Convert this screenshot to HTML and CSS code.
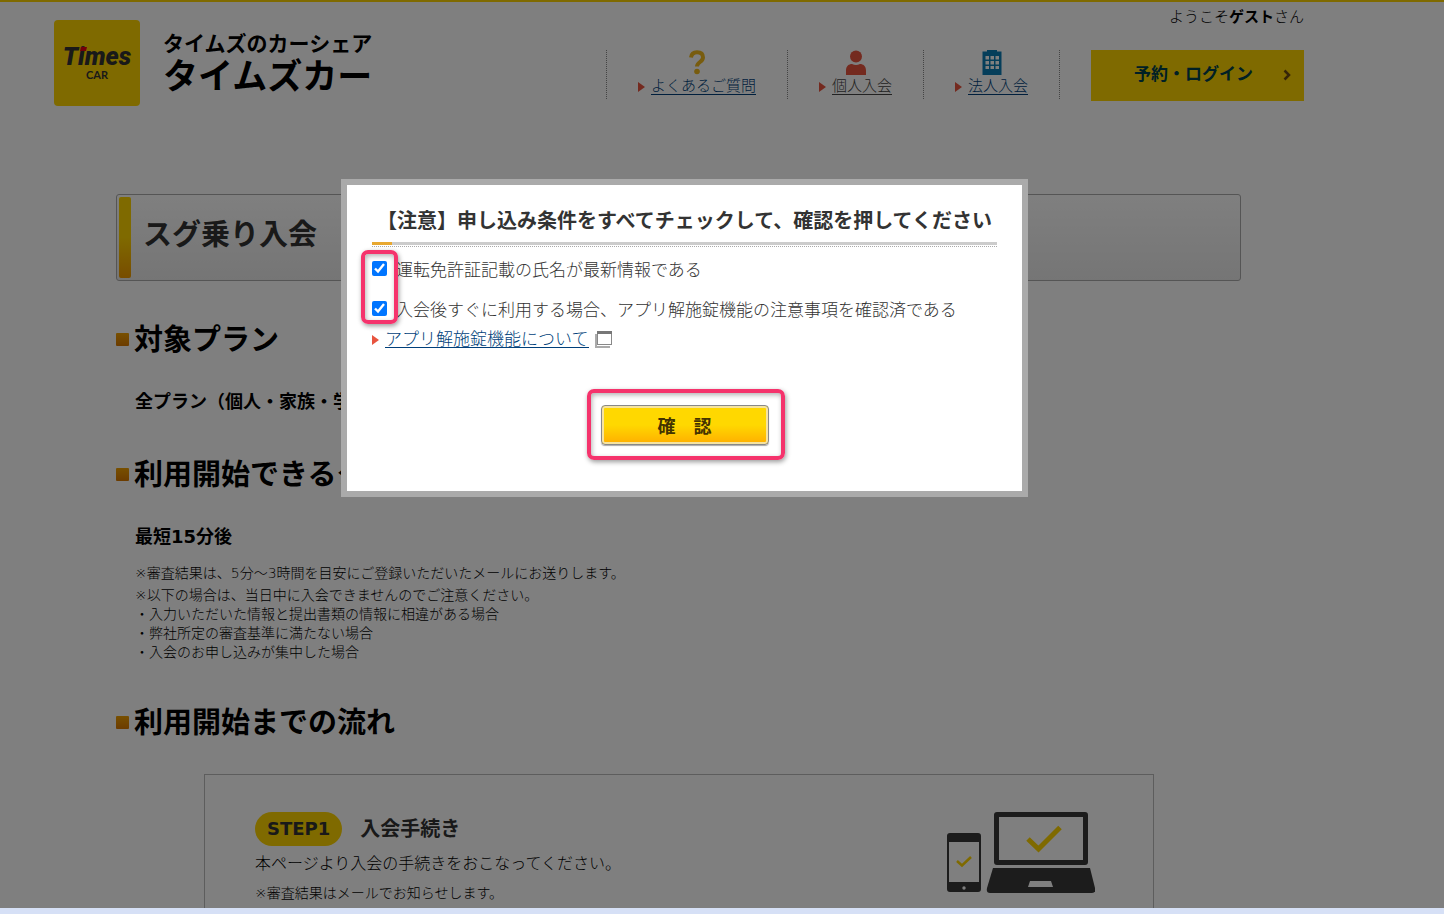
FILE: index.html
```html
<!DOCTYPE html>
<html lang="ja">
<head>
<meta charset="utf-8">
<meta name="viewport" content="width=device-width, initial-scale=1">
<title>スグ乗り入会 | タイムズカー</title>
<link rel="stylesheet" href="styles.css">
</head>
<body>
<div class="page">
  <header class="header">
    <a class="brand" href="#">
      <svg class="brand-mark" viewBox="0 0 86 86" role="img" aria-label="Times CAR">
        <rect width="86" height="86" rx="4" fill="#ffd400"/>
        <text class="mark-times" x="43" y="45" text-anchor="middle">Times</text>
        <path d="M27 27h6l-1 4h-6z" fill="#e60012"/>
        <text class="mark-car" x="43" y="59" text-anchor="middle">CAR</text>
      </svg>
      <span class="brand-text">
        <span class="brand-sub">タイムズのカーシェア</span>
        <span class="brand-name">タイムズカー</span>
      </span>
    </a>
    <div class="header-side">
      <p class="greeting">ようこそ<b>ゲスト</b>さん</p>
      <div class="header-row">
        <nav class="nav">
          <div class="nav-item nav-wide">
            <svg class="nav-icon" viewBox="0 0 28 25"><path d="M8 7.500C8.500 3.500 10.500 2.200 14 2.200c4 0 6 2.200 6 5.300 0 4.500-6 4.500-6 9" fill="none" stroke="#f0b81c" stroke-width="4"/><circle cx="14" cy="21.500" r="2.800" fill="#f0b81c"/></svg>
            <a class="arrow-link" href="#">よくあるご質問</a>
          </div>
          <div class="nav-item">
            <svg class="nav-icon" viewBox="0 0 28 25"><circle cx="14" cy="6.500" r="6" fill="#e8543f"/><path d="M4 25v-4.500C4 16 7 14 10 14q4 2 8 0c3 0 6 2 6 6.500V25z" fill="#e8543f"/></svg>
            <a class="arrow-link muted" href="#">個人入会</a>
          </div>
          <div class="nav-item">
            <svg class="nav-icon" viewBox="0 0 28 25"><path d="M4.500 1.500H9V0h10v1.500h4.500V25h-19z" fill="#0a7db5"/><g fill="#fff"><path d="M7.500 6H11v3.500H7.500zM12.500 6H16v3.500h-3.500zM17.500 6H21v3.500h-3.500zM7.500 11H11v3.500H7.500zM12.500 11H16v3.500h-3.500zM17.500 11H21v3.500h-3.500zM7.500 16H11v3H7.500zM12.500 16H16v3h-3.500zM17.500 16H21v3h-3.500z"/></g></svg>
            <a class="arrow-link" href="#">法人入会</a>
          </div>
        </nav>
        <button class="login" type="button">予約・ログイン
          <svg class="login-arrow" viewBox="0 0 8 12"><path d="M1.500 1.500L6 6l-4.500 4.500" fill="none" stroke="#6b4a10" stroke-width="2.500"/></svg>
        </button>
      </div>
    </div>
  </header>

  <main class="main">
    <h1 class="title"><span class="title-bar"></span><span class="title-text">スグ乗り入会</span></h1>

    <h2 class="section">対象プラン</h2>
    <p class="lead">全プラン（個人・家族・学生・法人）</p>

    <h2 class="section">利用開始できるタイミング</h2>
    <p class="lead">最短15分後</p>
    <div class="notes">
      <p>※審査結果は、5分～3時間を目安にご登録いただいたメールにお送りします。</p>
      <p>※以下の場合は、当日中に入会できませんのでご注意ください。</p>
      <ul>
        <li>・入力いただいた情報と提出書類の情報に相違がある場合</li>
        <li>・弊社所定の審査基準に満たない場合</li>
        <li>・入会のお申し込みが集中した場合</li>
      </ul>
    </div>

    <h2 class="section">利用開始までの流れ</h2>
    <section class="step">
      <div class="step-body">
        <h3 class="step-head"><span class="pill">STEP1</span>入会手続き</h3>
        <p class="step-text">本ページより入会の手続きをおこなってください。</p>
        <p class="step-note">※審査結果はメールでお知らせします。</p>
      </div>
      <svg class="devices" viewBox="0 0 149 81">
        <g fill="#383838">
          <path fill-rule="evenodd" d="M51 0h88a3 3 0 0 1 3 3v47a3 3 0 0 1-3 3H51a3 3 0 0 1-3-3V3a3 3 0 0 1 3-3zM53 5v43h84V5z"/>
          <path d="M47 56h97l5 20q1 5-3 5H44q-4 0-3-5z"/>
          <path fill-rule="evenodd" d="M4 21h28a3 3 0 0 1 3 3v53a3 3 0 0 1-3 3H4a3 3 0 0 1-3-3V24a3 3 0 0 1 3-3zM3 30v40h30V30z"/>
        </g>
        <path d="M84 69h21l2 6H82z" fill="#fff"/>
        <circle cx="18" cy="76" r="1.700" fill="#fff"/>
        <path d="M82 27l10.500 10L114 15.500" fill="none" stroke="#ffd400" stroke-width="5"/>
        <path d="M11 49l5 4.500 9-8.500" fill="none" stroke="#ffd400" stroke-width="2.500"/>
      </svg>
    </section>
  </main>
</div>

<div class="overlay">
  <div class="modal" role="dialog" aria-modal="true" aria-labelledby="modal-title">
    <h2 class="modal-title" id="modal-title">【注意】申し込み条件をすべてチェックして、確認を押してください</h2>
    <div class="checks">
      <div class="check"><input type="checkbox" id="c1" checked><label for="c1">運転免許証記載の氏名が最新情報である</label></div>
      <div class="check"><input type="checkbox" id="c2" checked><label for="c2">入会後すぐに利用する場合、アプリ解施錠機能の注意事項を確認済である</label></div>
      <span class="mark mark-checks"></span>
    </div>
    <p class="modal-link">
      <a class="arrow-link" href="#">アプリ解施錠機能について</a>
      <svg class="window-icon" viewBox="0 0 18 18"><path d="M1 4v13h14" fill="none" stroke="#aaa" stroke-width="2"/><rect x="2.500" y="1.500" width="14" height="13" fill="#fff" stroke="#888"/><path d="M2 1h15v3H2z" fill="#777"/></svg>
    </p>
    <div class="confirm-row">
      <div class="confirm-wrap">
        <button class="confirm" type="button">確　認</button>
        <span class="mark mark-confirm"></span>
      </div>
    </div>
  </div>
</div>
<div class="taskbar"></div>
</body>
</html>
```

FILE: styles.css
```css
* { box-sizing: border-box; }

body {
  margin: 0;
  height: 100vh;
  overflow: hidden;
  background: #fff;
  color: #000;
  font-family: "DejaVu Sans", "Noto Sans CJK JP", sans-serif;
  font-size: 15px;
  font-weight: 300;
  text-spacing-trim: space-all;
}

h1, h2, h3, p, ul { margin: 0; padding: 0; }
ul { list-style: none; }
b { font-weight: 700; }
button { font-family: inherit; border: 0; cursor: pointer; }

.page {
  border-top: 2px solid #ffd400;
  padding: 0 140px 0 54px;
}

/* Header */
.header {
  display: flex;
  justify-content: space-between;
  align-items: flex-start;
  height: 192px;
  padding-top: 5px;
}
.brand {
  display: flex;
  gap: 23px;
  margin-top: 13px;
  color: #000;
  text-decoration: none;
  font-family: "Noto Sans CJK JP", sans-serif;
  font-weight: 700;
}
.brand-mark { width: 86px; height: 86px; }
.mark-times {
  font: italic 900 25px Roboto, sans-serif;
  fill: #333;
}
.mark-car {
  font: 700 11px Lato, sans-serif;
  fill: #333;
}
.brand-text {
  display: flex;
  flex-direction: column;
  padding-top: 10px;
}
.brand-sub { font-size: 21px; line-height: 24px; }
.brand-name { font-size: 35px; line-height: 40px; }

.header-side {
  display: flex;
  flex-direction: column;
  align-items: flex-end;
}
.greeting { line-height: 20px; }
.header-row {
  display: flex;
  align-items: flex-start;
  gap: 31px;
  margin-top: 23px;
}
.nav { display: flex; border-right: 1px dotted #888; }
.nav-item {
  display: flex;
  flex-direction: column;
  align-items: center;
  width: 136px;
  height: 49px;
  border-left: 1px dotted #888;
}
.nav-wide { width: 181px; }
.nav-icon { width: 28px; height: 25px; }
.arrow-link {
  position: relative;
  padding-left: 13px;
  color: #003f7a;
  line-height: 22px;
  text-decoration: none;
  background: linear-gradient(currentColor, currentColor) 13px 19px / 100% 1px no-repeat;
}
.arrow-link::before {
  content: "";
  position: absolute;
  left: 0;
  top: 7px;
  border: solid transparent;
  border-width: 5px 0 5px 7px;
  border-left-color: #e8543f;
}
.muted { color: #444; }

.login {
  display: flex;
  align-items: center;
  justify-content: flex-end;
  gap: 30px;
  width: 213px;
  height: 51px;
  padding: 0 13px 6px 0;
  background: #ffd400;
  color: #00404a;
  font-size: 17px;
  font-weight: 700;
}
.login-arrow { width: 8px; height: 12px; margin-top: 4px; }

/* Content */
.main { padding: 0 63px 40px 62px; }
.title {
  display: flex;
  align-items: center;
  gap: 12px;
  height: 87px;
  padding: 2px;
  border: 1px solid #aaa;
  border-radius: 3px;
  background: linear-gradient(#fff, #ebebeb);
  color: #333;
  font-size: 29px;
  line-height: 40px;
  white-space: nowrap;
}
.title-text { padding-bottom: 6px; }
.title-bar {
  align-self: stretch;
  width: 12px;
  border-radius: 2px;
  background: linear-gradient(#ffd400 50%, #f09a00);
}
.section {
  display: flex;
  align-items: center;
  gap: 5px;
  margin-top: 38px;
  font-size: 29px;
  line-height: 42px;
  white-space: nowrap;
}
.section::before {
  content: "";
  width: 13px;
  height: 13px;
  margin-bottom: 2px;
  border-radius: 1px;
  background: linear-gradient(#f0a000, #d87800);
}
.lead {
  margin: 27px 0 0 19px;
  font-size: 18px;
  line-height: 28px;
  font-weight: 700;
}
.notes {
  margin: 13px 0 40px 19px;
  font-size: 14px;
  line-height: 19px;
}
.notes p { margin-bottom: 3px; }
.notes p + p { margin-bottom: 0; }

.step {
  display: flex;
  justify-content: space-between;
  align-items: flex-start;
  margin: 30px 87px 0 88px;
  padding: 37px 58px 60px 50px;
  border: 1px solid #bbb;
}
.step-head {
  display: flex;
  align-items: center;
  gap: 18px;
  color: #333;
  font-size: 20px;
  line-height: 34px;
}
.pill {
  padding: 0 12px;
  border-radius: 17px;
  background: #ffd400;
  font-size: 18px;
}
.step-text { margin-top: 4px; font-size: 16px; line-height: 28px; }
.step-note { margin-top: 5px; font-size: 14px; line-height: 20px; }
.devices { width: 149px; height: 81px; }

/* Dialog */
.overlay {
  position: fixed;
  inset: 0;
  display: flex;
  justify-content: center;
  align-items: flex-start;
  padding: 179px 75px 0 0;
  background: rgba(0, 0, 0, .5);
}
.modal {
  width: 687px;
  max-width: 96%;
  padding: 20px 25px 46px;
  border: 6px solid #aaa;
  background: #fff;
  color: #333;
  font-size: 17px;
}
.modal-title {
  position: relative;
  padding-bottom: 5px;
  border-bottom: 3px solid #ccc;
  font-size: 20px;
  line-height: 32px;
  text-align: center;
  white-space: nowrap;
}
.modal-title::before {
  content: "";
  position: absolute;
  left: 0;
  bottom: -3px;
  width: 20px;
  height: 3px;
  background: #e8a830;
}
.modal-title::after {
  content: "";
  position: absolute;
  left: 0;
  right: 0;
  bottom: -5px;
  border-bottom: 1px dotted #aaa;
}
.checks {
  position: relative;
  display: flex;
  flex-direction: column;
  gap: 16px;
  margin-top: 13px;
}
.check {
  display: flex;
  align-items: center;
  gap: 9px;
  line-height: 24px;
}
.check input {
  width: 15px;
  height: 15px;
  margin: 0 0 4px;
  accent-color: #0075ff;
}
.modal-link {
  display: flex;
  align-items: center;
  gap: 6px;
  margin-top: 6px;
}
.window-icon { width: 18px; height: 18px; }
.confirm-row {
  display: flex;
  justify-content: center;
  margin-top: 55px;
}
.confirm-wrap { position: relative; }
.confirm {
  display: block;
  width: 168px;
  height: 40px;
  border: 1px solid #888;
  border-radius: 4px;
  box-shadow: inset 0 0 0 2px #f5e3a0, 0 1px 1px #aaa;
  background: linear-gradient(#ffd800 50%, #ffae00);
  color: #443300;
  font-size: 18px;
  font-weight: 700;
}

/* Attention frames */
.mark {
  position: absolute;
  border: 4px solid #f5336c;
  border-radius: 7px;
  box-shadow: 1px 2px 5px rgba(0, 0, 0, .4), inset 1px 2px 5px rgba(0, 0, 0, .3);
  pointer-events: none;
}
.mark-checks { left: -11px; top: -8px; width: 37px; height: 74px; }
.mark-confirm { inset: -16px -16px -15px -14px; }

.taskbar {
  position: fixed;
  left: 0;
  right: 0;
  bottom: 0;
  height: 6px;
  background: #d6e0f6;
}
```
